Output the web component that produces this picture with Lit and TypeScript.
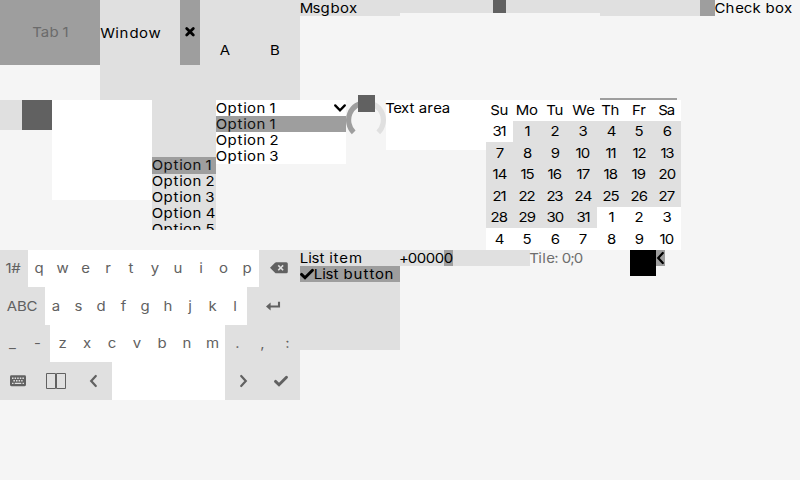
import { LitElement, html, svg, css, nothing } from "lit";
import { customElement, property } from "lit/decorators.js";
import { classMap } from "lit/directives/class-map.js";

// Whole-pixel advance of each glyph at the interface's single text size.
const ADVANCE: Record<string, number> = {
  " ": 4, "#": 10, "+": 8, ",": 3, "-": 5, ".": 3, ":": 3, ";": 3, "_": 7,
  "0": 9, "1": 5, "2": 8, "3": 8, "4": 9, "5": 8, "6": 9, "7": 8, "8": 9, "9": 9,
  A: 10, B: 10, C: 10, F: 9, L: 8, M: 13, O: 11, S: 8, T: 8, W: 15,
  a: 8, b: 10, c: 8, d: 10, e: 9, f: 5, g: 10, h: 10, i: 4, j: 4, k: 9, l: 4,
  m: 15, n: 10, o: 9, p: 10, q: 10, r: 6, s: 7, t: 6, u: 10, v: 8, w: 13, x: 8,
  y: 8, z: 7,
};
const KERN: Record<string, number> = { Te: -1, ex: -1, Tu: -1, We: -1, Fr: -1 };
const STRETCH = 1.1;

@customElement("ui-label")
class UiLabel extends LitElement {
  @property() text = "";
  static styles = css`
    :host { display: block; flex: none; height: 16px; }
    svg { display: block; overflow: visible; }
    text {
      font: 400 13.6px Inter, "Liberation Sans", sans-serif;
      text-anchor: middle;
      fill: currentColor;
      white-space: pre;
    }
  `;
  render() {
    let pen = 0;
    const chars = [...this.text];
    const xs = chars.map((c, i) => {
      pen += KERN[(chars[i - 1] ?? "") + c] ?? 0;
      const a = ADVANCE[c] ?? 9;
      const mid = (pen + a / 2) / STRETCH;
      pen += a;
      return mid.toFixed(2);
    });
    return html`<svg width=${pen} height="16">
      <text transform="scale(${STRETCH} 1)" x=${xs.join(" ")} y="13">${this.text}</text>
    </svg>`;
  }
}

const label = (t: string) => html`<ui-label .text=${t}></ui-label>`;

const ICONS: Record<string, { w: number; body: unknown }> = {
  close: { w: 11, body: svg`<path d="M1.7 4.4 8.3 11M8.300 4.400 1.700 11" stroke="currentColor" stroke-width="2.8" stroke-linecap="round"/>` },
  down: { w: 12, body: svg`<path d="M1.2 5.4 6 10.3 10.8 5.4" fill="none" stroke="currentColor" stroke-width="2.3" stroke-linecap="round"/>` },
  left: { w: 9, body: svg`<path d="M6.8 3 2.2 8 6.8 13" fill="none" stroke="currentColor" stroke-width="2.2" stroke-linecap="round"/>` },
  right: { w: 9, body: svg`<path d="M2.2 3 6.8 8 2.2 13" fill="none" stroke="currentColor" stroke-width="2.2" stroke-linecap="round"/>` },
  ok: { w: 14, body: svg`<path d="M1.5 8.4 5 11.8 12.5 4.2" fill="none" stroke="currentColor" stroke-width="2.9" stroke-linecap="round"/>` },
  back: { w: 18, body: svg`<path fill="currentColor" fill-rule="evenodd" d="M0 7.8 5 2.8Q5.500 2.300 6.300 2.300H16.300Q17.800 2.300 17.800 3.800V11.800Q17.800 13.300 16.300 13.300H6.300Q5.500 13.300 5 12.800ZM8.800 4.800 7.700 5.900 9.600 7.800 7.700 9.700 8.800 10.800 10.700 8.900 12.600 10.800 13.700 9.700 11.800 7.800 13.700 5.900 12.600 4.800 10.700 6.700Z"/>` },
  enter: { w: 14, body: svg`<path d="M13 3.800V8.500H3" fill="none" stroke="currentColor" stroke-width="2.1"/><path d="M0 8.500 4.600 4.500V12.500Z" fill="currentColor"/>` },
  keyboard: { w: 17, body: svg`<rect y="2.200" width="16" height="11" rx="1.400" fill="currentColor"/><path class="cut" d="M2 5.200H14M3.400 7.700H12.600" stroke-dasharray="1.500 1.100" stroke-width="1.400"/><path class="cut" d="M2 10.400H3.500M4.700 10.400H11.300M12.500 10.400H14" stroke-width="1.400"/>` },
  boxes: { w: 20, body: svg`<path d="M.5.5H9.500V15.500H.5ZM10.500.5H19.500V15.500H10.500Z" fill="none" stroke="currentColor"/>` },
};

@customElement("ui-icon")
class UiIcon extends LitElement {
  @property() name = "";
  static styles = css`
    :host { display: block; flex: none; height: 16px; }
    svg { display: block; overflow: visible; }
    .cut { stroke: #e0e0e0; fill: none; }
  `;
  render() {
    const i = ICONS[this.name];
    return html`<svg width=${i.w} height="16">${i.body}</svg>`;
  }
}

const icon = (n: string) => html`<ui-icon .name=${n}></ui-icon>`;

@customElement("ui-calendar")
class UiCalendar extends LitElement {
  static styles = css`
    :host { display: block; position: relative; width: 195px; height: 150px; background: #fff; }
    .grid {
      display: grid;
      grid-template-columns: 27px repeat(6, 28px);
      grid-template-rows: 21px 21px 22px 21px 22px 21px 22px;
    }
    .cell { display: flex; justify-content: center; padding-top: 2px; box-sizing: border-box; }
    .low { padding-top: 3px; }
    .month { background: #e0e0e0; }
    .bar { position: absolute; top: -2px; left: 114px; width: 77px; height: 2px; background: #9e9e9e; }
  `;
  render() {
    const days = ["31"];
    for (let d = 1; d <= 31; d++) days.push(String(d));
    for (let d = 1; d <= 10; d++) days.push(String(d));
    const cells = ["Su", "Mo", "Tu", "We", "Th", "Fr", "Sa", ...days];
    return html`<div class="grid">
        ${cells.map((t, i) => html`<div class=${classMap({
          cell: true,
          month: i >= 8 && i <= 38,
          low: [2, 4, 6].includes(Math.floor(i / 7)),
        })}>${label(t)}</div>`)}
      </div>
      <div class="bar"></div>`;
  }
}

type Key = { t?: string; i?: string; w: number; white?: boolean };
const letters = (s: string, total: number): Key[] =>
  [...s].map((t) => ({ t, w: total / s.length, white: true }));

const KEY_ROWS: Key[][] = [
  [{ t: "1#", w: 28 }, ...letters("qwertyuiop", 231), { i: "back", w: 41 }],
  [{ t: "ABC", w: 45 }, ...letters("asdfghjkl", 202), { i: "enter", w: 53 }],
  [{ t: "_", w: 25 }, { t: "-", w: 25 }, ...letters("zxcvbnm", 175), { t: ".", w: 25 }, { t: ",", w: 25 }, { t: ":", w: 25 }],
  [{ i: "keyboard", w: 37 }, { i: "boxes", w: 38 }, { i: "left", w: 37 }, { w: 113, white: true }, { i: "right", w: 37 }, { i: "ok", w: 38 }],
];

@customElement("ui-keyboard")
class UiKeyboard extends LitElement {
  static styles = css`
    :host { display: grid; grid-template-rows: 37px 38px 37px 38px; width: 300px; background: #e0e0e0; color: #616161; }
    .row { display: flex; }
    .key { display: flex; justify-content: center; box-sizing: border-box; padding-top: 10px; }
    .row:nth-child(even) .key { padding-top: 11px; }
    .key ui-label { margin-right: 1px; }
    .white { background: #fff; }
  `;
  render() {
    return html`${KEY_ROWS.map((r) => html`<div class="row">${r.map((k) => html`
      <div class=${classMap({ key: true, white: !!k.white })} style="width:${k.w}px">
        ${k.t ? label(k.t) : k.i ? icon(k.i) : nothing}
      </div>`)}</div>`)}`;
  }
}

@customElement("app-root")
class AppRoot extends LitElement {
  static styles = css`
    :host { display: block; width: 800px; height: 480px; overflow: hidden; background: #f5f5f5; color: #000; }
    .line { display: flex; align-items: flex-start; }
    .first { height: 100px; }
    .second { height: 150px; }
    .tab { display: flex; justify-content: center; box-sizing: border-box; width: 100px; height: 65px; padding-top: 24px; background: #9e9e9e; color: #6b6b6b; }
    .window { display: flex; width: 100px; height: 100px; background: #e0e0e0; }
    .title { flex: 1; padding-top: 25px; }
    .close { display: flex; justify-content: center; width: 20px; height: 65px; padding-top: 24px; box-sizing: border-box; background: #9e9e9e; }
    .matrix { display: flex; box-sizing: border-box; width: 100px; height: 100px; padding-top: 42px; background: #e0e0e0; }
    .matrix div { display: flex; flex: 1; justify-content: center; }
    .box { width: 100px; height: 16px; background: #e0e0e0; }
    .slider { display: flex; justify-content: center; width: 200px; height: 13px; background: #e0e0e0; }
    .knob { width: 13px; height: 13px; margin-right: 1px; background: #616161; }
    .mark { width: 15px; height: 16px; background: #9e9e9e; }
    .switch { display: flex; justify-content: flex-end; width: 52px; height: 30px; background: #e0e0e0; }
    .thumb { width: 30px; background: #616161; }
    .chart { width: 100px; height: 100px; background: #fff; }
    .roller { box-sizing: border-box; width: 64px; height: 130px; padding-top: 57px; overflow: hidden; background: #e0e0e0; }
    .roller .picked { height: 17px; margin-bottom: -1px; }
    .picked { background: #9e9e9e; }
    .roller .picked, .drop .picked { color: #111; }
    .drop { width: 130px; background: #fff; }
    .head { display: flex; justify-content: space-between; }
    .arc { position: relative; width: 40px; height: 40px; }
    .arc svg { display: block; }
    .handle { position: absolute; left: 12px; top: -5px; width: 17px; height: 17px; background: #616161; }
    .area { width: 100px; height: 50px; background: #fff; }
    .list { width: 100px; height: 100px; background: #e0e0e0; }
    .button { display: flex; background: #9e9e9e; }
    .spin { display: flex; width: 130px; height: 16px; background: #e0e0e0; }
    .digits { position: relative; }
    .digits::before { content: ""; position: absolute; left: 44px; width: 9px; height: 16px; background: #9e9e9e; }
    .digits ui-label { position: relative; }
    .tile { width: 100px; color: #6e6e6e; }
    .canvas { width: 26px; height: 26px; background: #000; }
    .menu { display: flex; justify-content: center; width: 9px; height: 16px; background: #9e9e9e; }
  `;
  render() {
    return html`
      <div class="line first">
        <div class="tab">${label("Tab 1")}</div>
        <div class="window">
          <div class="title">${label("Window")}</div>
          <div class="close">${icon("close")}</div>
        </div>
        <div class="matrix"><div>${label("A")}</div><div>${label("B")}</div></div>
        <div class="box">${label("Msgbox")}</div>
        <div class="slider"><div class="knob"></div></div>
        <div class="box"></div>
        <div class="mark"></div>
        ${label("Check box")}
      </div>
      <div class="line second">
        <div class="switch"><div class="thumb"></div></div>
        <div class="chart"></div>
        <div class="roller">
          ${[1, 2, 3, 4, 5].map((n) => html`<div class=${classMap({ picked: n === 1 })}>${label(`Option ${n}`)}</div>`)}
        </div>
        <div class="drop">
          <div class="head">${label("Option 1")}${icon("down")}</div>
          ${[1, 2, 3].map((n) => html`<div class=${classMap({ picked: n === 1 })}>${label(`Option ${n}`)}</div>`)}
        </div>
        <div class="arc">
          <svg width="40" height="40" fill="none" stroke-width="5.200">
            <path d="M20 2.600A17.400 17.400 0 0 1 32.300 32.300" stroke="#e0e0e0"/>
            <path d="M7.700 32.300A17.400 17.400 0 0 1 20 2.600" stroke="#9e9e9e"/>
          </svg>
          <div class="handle"></div>
        </div>
        <div class="area">${label("Text area")}</div>
        <ui-calendar></ui-calendar>
      </div>
      <div class="line">
        <ui-keyboard></ui-keyboard>
        <div class="list">
          ${label("List item")}
          <div class="button">${icon("ok")}${label("List button")}</div>
        </div>
        <div class="spin"><div class="digits">${label("+00000")}</div></div>
        <div class="tile">${label("Tile: 0;0")}</div>
        <div class="canvas"></div>
        <div class="menu">${icon("left")}</div>
      </div>
    `;
  }
}
